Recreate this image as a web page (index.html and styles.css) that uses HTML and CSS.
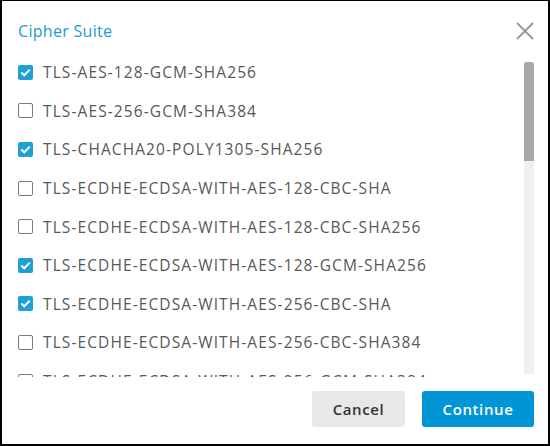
FILE: index.html
```html
<!DOCTYPE html>
<html lang="en">

<head>
	<meta charset="UTF-8">
	<meta name="viewport" content="width=device-width, initial-scale=1.0">
	<title>Cipher Suite</title>
	<link rel="stylesheet" href="styles.css">
</head>

<body>
	<div class="dialog">
		<header class="dialog-header">
			<h1 class="title">Cipher Suite</h1>
			<button class="close-btn" aria-label="Close">
				<svg width="18" height="18" viewBox="0 0 18 18">
					<path d="M1 1 L17 17 M17 1 L1 17" stroke="#9a9a9a" stroke-width="2" fill="none" />
				</svg>
			</button>
		</header>

		<div class="body">
			<ul class="suite-list">
				<li class="suite"><span class="box checked"></span>TLS-AES-128-GCM-SHA256</li>
				<li class="suite"><span class="box"></span>TLS-AES-256-GCM-SHA384</li>
				<li class="suite"><span class="box checked"></span>TLS-CHACHA20-POLY1305-SHA256</li>
				<li class="suite"><span class="box"></span>TLS-ECDHE-ECDSA-WITH-AES-128-CBC-SHA</li>
				<li class="suite"><span class="box"></span>TLS-ECDHE-ECDSA-WITH-AES-128-CBC-SHA256</li>
				<li class="suite"><span class="box checked"></span>TLS-ECDHE-ECDSA-WITH-AES-128-GCM-SHA256</li>
				<li class="suite"><span class="box checked"></span>TLS-ECDHE-ECDSA-WITH-AES-256-CBC-SHA</li>
				<li class="suite"><span class="box"></span>TLS-ECDHE-ECDSA-WITH-AES-256-CBC-SHA384</li>
				<li class="suite"><span class="box"></span>TLS-ECDHE-ECDSA-WITH-AES-256-GCM-SHA384</li>
			</ul>
			<div class="scrollbar">
				<div class="thumb"></div>
			</div>
		</div>

		<footer class="dialog-footer">
			<button class="btn btn-cancel">Cancel</button>
			<button class="btn btn-continue">Continue</button>
		</footer>
	</div>
</body>

</html>
```

FILE: styles.css
```css
html, body {
	margin: 0;
	padding: 0;
}

body {
	font-family: "Open Sans", "Liberation Sans", sans-serif;
	background-color: #fff;
}

.dialog {
	box-sizing: border-box;
	width: 550px;
	height: 446px;
	border: 2px solid #000;
	border-top-width: 1px;
	display: flex;
	flex-direction: column;
	background-color: #fff;
}

.dialog-header {
	display: flex;
	justify-content: space-between;
	align-items: center;
	padding: 16px 14px 0 16px;
	height: 28px;
}

.title {
	margin: 0;
	font-size: 16px;
	font-weight: normal;
	letter-spacing: 0.3px;
	color: #1a9ad6; /* clarity blue */
}

.close-btn {
	border: none;
	background: none;
	padding: 0;
	width: 18px;
	height: 18px;
	cursor: pointer;
}

.body {
	display: flex;
	height: 324px;
	margin-top: 8px;
	padding-right: 14px;
	overflow: hidden;
}

.suite-list {
	flex: 1;
	height: 324px;
	list-style: none;
	margin: 0;
	padding: 0 0 0 16px;
	overflow: hidden;
}

.suite {
	display: flex;
	align-items: center;
	height: 38.6px;
	font-size: 15.5px;
	letter-spacing: 1.1px;
	color: #585858;
	white-space: nowrap;
}

.box {
	box-sizing: border-box;
	width: 15px;
	height: 15px;
	margin-right: 10px;
	border: 1px solid #7a7a7a;
	border-radius: 2px;
	flex-shrink: 0;
}

.box.checked {
	border: none;
	background-color: #1e9fd8;
	background-image: url("data:image/svg+xml;utf8,<svg xmlns='http://www.w3.org/2000/svg' width='15' height='15' viewBox='0 0 15 15'><path d='M3.3 7.6 L6.2 10.3 L11.8 4.6' stroke='white' stroke-width='2' fill='none'/></svg>");
}

.scrollbar {
	width: 10px;
	margin-top: 9px;
	background-color: #f0f0f0;
	height: 312px;
}

.thumb {
	height: 99px;
	background-color: #a8a8a8;
	border-radius: 3px 3px 0 0;
}

.dialog-footer {
	display: flex;
	justify-content: flex-end;
	gap: 17px;
	padding: 14px 14px 0 0;
}

.btn {
	height: 36px;
	border: none;
	border-radius: 3px;
	font-family: inherit;
	font-size: 15px;
	font-weight: 600;
	letter-spacing: 0.6px;
	cursor: pointer;
}

.btn-cancel {
	width: 93px;
	background-color: #e8e8e8;
	color: #333;
}

.btn-continue {
	width: 112px;
	background-color: #0096d6;
	color: #fff;
}
```
